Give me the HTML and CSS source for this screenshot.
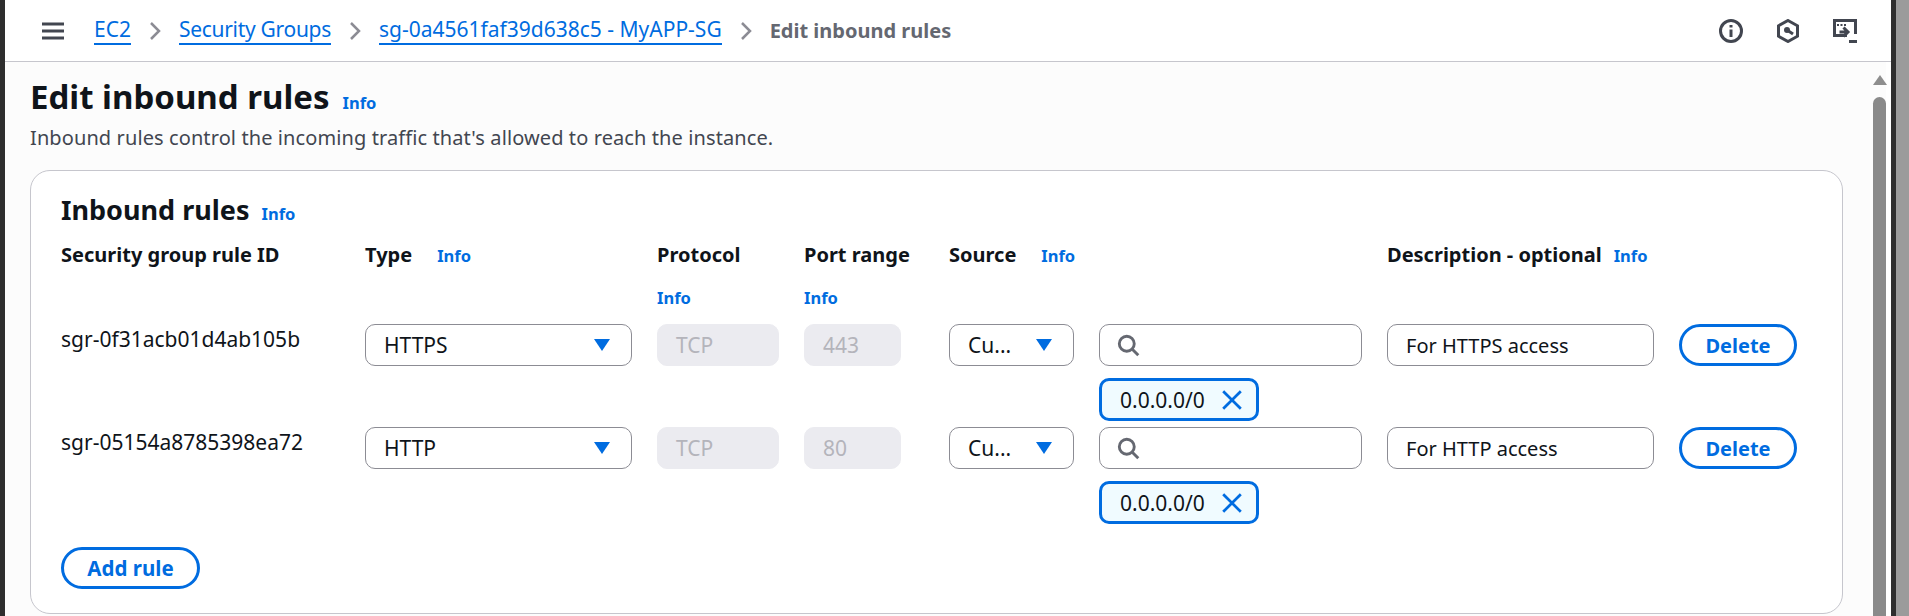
FILE: index.html
```html
<!DOCTYPE html>
<html lang="en">
<head>
  <meta charset="UTF-8">
  <title>Edit inbound rules</title>
  <link rel="stylesheet" href="styles.css">
</head>
<body>
  <div class="window">
    <div class="app">
      <header class="topbar">
        <svg class="menu" viewBox="0 0 22 18"><path d="M0 2h22M0 9h22M0 16h22"/></svg>
        <nav class="crumbs">
          <a href="#">EC2</a>
          <svg class="sep" viewBox="0 0 12 18"><path d="M2 1l8 8-8 8"/></svg>
          <a class="tight" href="#">Security Groups</a>
          <svg class="sep" viewBox="0 0 12 18"><path d="M2 1l8 8-8 8"/></svg>
          <a href="#">sg-0a4561faf39d638c5 - MyAPP-SG</a>
          <svg class="sep" viewBox="0 0 12 18"><path d="M2 1l8 8-8 8"/></svg>
          <span class="current">Edit inbound rules</span>
        </nav>
        <div class="tools">
          <svg viewBox="0 0 24 24"><circle cx="12" cy="12" r="10.5"/><path d="M12 10.5v7.5"/><path d="M12 6v2.5"/></svg>
          <svg viewBox="0 0 24 24"><path d="M12 1.5l9.500 5.300v10.400L12 22.500l-9.500-5.300V6.800z"/><path d="M11 11l6 4"/><circle class="dot" cx="11" cy="11" r="3"/></svg>
          <svg viewBox="0 0 24 24"><path d="M14 16.500H1.500v-15h21V15"/><path d="M4 6h2M7.500 6h2M11 6h2" class="thin"/><path d="M6.500 13h8M10.500 8.500l4.500 4.500-4.500 4.500"/><path d="M16 22.500h8"/></svg>
        </div>
      </header>

      <div class="body">
        <main class="content">
          <h1>Edit inbound rules <a class="info" href="#">Info</a></h1>
          <p class="lead">Inbound rules control the incoming traffic that's allowed to reach the instance.</p>

          <section class="card">
            <h2>Inbound rules <a class="info" href="#">Info</a></h2>

            <div class="rules">
              <div class="label">Security group rule ID</div>
              <div class="label wide">Type <a class="info" href="#">Info</a></div>
              <div class="label stacked">Protocol <a class="info" href="#">Info</a></div>
              <div class="label stacked">Port range <a class="info" href="#">Info</a></div>
              <div class="label wide">Source <a class="info" href="#">Info</a></div>
              <div></div>
              <div class="label">Description - optional <a class="info" href="#">Info</a></div>
              <div></div>

              <div class="rule-id">sgr-0f31acb01d4ab105b</div>
              <div class="field select"><span>HTTPS</span><i class="caret"></i></div>
              <div class="field off">TCP</div>
              <div class="field off short">443</div>
              <div class="field select"><span>Cu...</span><i class="caret"></i></div>
              <div class="cidr">
                <div class="field">
                  <svg class="search" viewBox="0 0 20 20"><circle cx="8.500" cy="8.500" r="6.500"/><path d="M13.500 13.500l5 5"/></svg>
                </div>
                <div class="tag">0.0.0.0/0 <svg viewBox="0 0 20 20"><path d="M2 2l16 16M18 2L2 18"/></svg></div>
              </div>
              <div class="field desc">For HTTPS access</div>
              <button class="btn">Delete</button>

              <div class="rule-id">sgr-05154a8785398ea72</div>
              <div class="field select"><span>HTTP</span><i class="caret"></i></div>
              <div class="field off">TCP</div>
              <div class="field off short">80</div>
              <div class="field select"><span>Cu...</span><i class="caret"></i></div>
              <div class="cidr">
                <div class="field">
                  <svg class="search" viewBox="0 0 20 20"><circle cx="8.500" cy="8.500" r="6.500"/><path d="M13.500 13.500l5 5"/></svg>
                </div>
                <div class="tag">0.0.0.0/0 <svg viewBox="0 0 20 20"><path d="M2 2l16 16M18 2L2 18"/></svg></div>
              </div>
              <div class="field desc">For HTTP access</div>
              <button class="btn">Delete</button>
            </div>

            <button class="btn add">Add rule</button>
          </section>
        </main>

        <div class="scrollbar">
          <i class="arrow"></i>
          <div class="thumb"></div>
        </div>
      </div>
    </div>
    <div class="edge"></div>
  </div>
</body>
</html>
```

FILE: styles.css
```css
* {
  box-sizing: border-box;
}

html, body {
  margin: 0;
  height: 100%;
  overflow: hidden;
}

body {
  font-family: "Noto Sans", sans-serif;
  font-size: 21px;
  color: #0f141a;
  background: #9b9b9b;
}

a {
  color: #006ce0;
}

.window {
  display: flex;
  height: 616px;
  border-left: 5px solid #2e2e2e;
}

.app {
  width: 1886px;
  display: flex;
  flex-direction: column;
  background: #fcfcfc;
}

/* top bar */
.topbar {
  height: 62px;
  flex: none;
  display: flex;
  align-items: center;
  padding: 0 34px 0 37px;
  background: #fff;
  border-bottom: 1px solid #c6c6cd;
}

.menu {
  width: 22px;
  height: 18px;
  margin-right: 30px;
  fill: none;
  stroke: #424650;
  stroke-width: 3;
}

.crumbs {
  display: flex;
  align-items: center;
  gap: 18px;
  flex: 1;
}

.crumbs a {
  text-decoration: none;
  border-bottom: 2px solid #006ce0;
  line-height: 27px;
}

.crumbs .tight {
  letter-spacing: -0.3px;
}

.sep {
  width: 12px;
  height: 18px;
  fill: none;
  stroke: #8c8c94;
  stroke-width: 2.500;
}

.current {
  font-size: 20px;
  font-weight: 700;
  color: #656871;
}

.tools {
  display: flex;
  gap: 33px;
}

.tools svg {
  width: 24px;
  height: 24px;
  fill: none;
  stroke: #424650;
  stroke-width: 3;
}

.tools .dot {
  fill: #424650;
  stroke: none;
}

.tools .thin {
  stroke-width: 2;
}

/* page */
.body {
  flex: 1;
  display: flex;
  min-height: 0;
}

.content {
  flex: 1;
  padding: 14px 30px 0 25px;
}

h1 {
  margin: 0;
  display: flex;
  align-items: baseline;
  gap: 13px;
  font-size: 33px;
  line-height: 42px;
  font-weight: 700;
}

.info {
  font-size: 16.5px;
  font-weight: 700;
  text-decoration: none;
}

.lead {
  margin: 1px 0 0;
  font-size: 20px;
  line-height: 26px;
  letter-spacing: 0.1px;
  color: #424650;
}

.card {
  margin-top: 19px;
  height: 444px;
  padding: 22px 30px 0;
  background: #fff;
  border: 1px solid #c6c6cd;
  border-radius: 20px;
}

h2 {
  margin: 0;
  display: flex;
  align-items: baseline;
  gap: 12px;
  font-size: 27px;
  line-height: 34px;
  font-weight: 700;
}

/* rules table */
.rules {
  display: grid;
  grid-template-columns: 279px 267px 122px 120px 125px 263px 267px 118px;
  grid-template-rows: 75px 97px 97px;
  column-gap: 25px;
  row-gap: 6px;
  margin-top: 12px;
}

.label {
  display: flex;
  align-items: baseline;
  gap: 12px;
  font-size: 20px;
  font-weight: 700;
  line-height: 24px;
}

.label.wide {
  gap: 25px;
}

.label.stacked {
  flex-direction: column;
  gap: 19px;
}

.rule-id {
  padding-top: 3px;
  line-height: 24px;
}

.field {
  height: 42px;
  display: flex;
  align-items: center;
  padding: 0 21px 0 18px;
  background: #fff;
  border: 1px solid #8c8c94;
  border-radius: 10px;
}

.select {
  justify-content: space-between;
}

.desc {
  font-size: 20px;
}

.caret {
  width: 0;
  height: 0;
  border-left: 8px solid transparent;
  border-right: 8px solid transparent;
  border-top: 12px solid #006ce0;
}

.off {
  background: #ebebf0;
  border-color: #ebebf0;
  color: #b4b4bb;
}

.short {
  width: 97px;
}

.cidr {
  display: flex;
  flex-direction: column;
  align-items: flex-start;
  gap: 12px;
}

.cidr .field {
  width: 100%;
}

.search {
  width: 23px;
  height: 23px;
  margin-left: -1px;
  fill: none;
  stroke: #656871;
  stroke-width: 2.500;
}

.tag {
  height: 43px;
  width: 160px;
  display: flex;
  align-items: center;
  justify-content: space-between;
  padding: 0 13px 0 18px;
  background: #f0fbff;
  border: 3px solid #006ce0;
  border-radius: 10px;
}

.tag svg {
  width: 22px;
  height: 22px;
  fill: none;
  stroke: #006ce0;
  stroke-width: 2.500;
}

.btn {
  height: 42px;
  font-family: inherit;
  font-size: 20px;
  font-weight: 700;
  color: #006ce0;
  background: #fff;
  border: 3px solid #006ce0;
  border-radius: 21px;
}

.add {
  width: 139px;
  margin-top: 23px;
  display: block;
  font-size: 20.5px;
}

/* window scrollbar */
.scrollbar {
  width: 18px;
  flex: none;
  display: flex;
  flex-direction: column;
  padding: 13px 5px 0 0;
  background: linear-gradient(to right, #fcfcfc 13px, #fff 13px);
}

.arrow {
  width: 0;
  height: 0;
  border-left: 7px solid transparent;
  border-right: 7px solid transparent;
  border-bottom: 10px solid #8e8e8e;
}

.thumb {
  flex: 1;
  width: 13px;
  margin-top: 12px;
  background: #8a8a8a;
  border-radius: 7px 7px 0 0;
}

.edge {
  width: 5px;
  flex: none;
  background: #2e2e2e;
}
```
